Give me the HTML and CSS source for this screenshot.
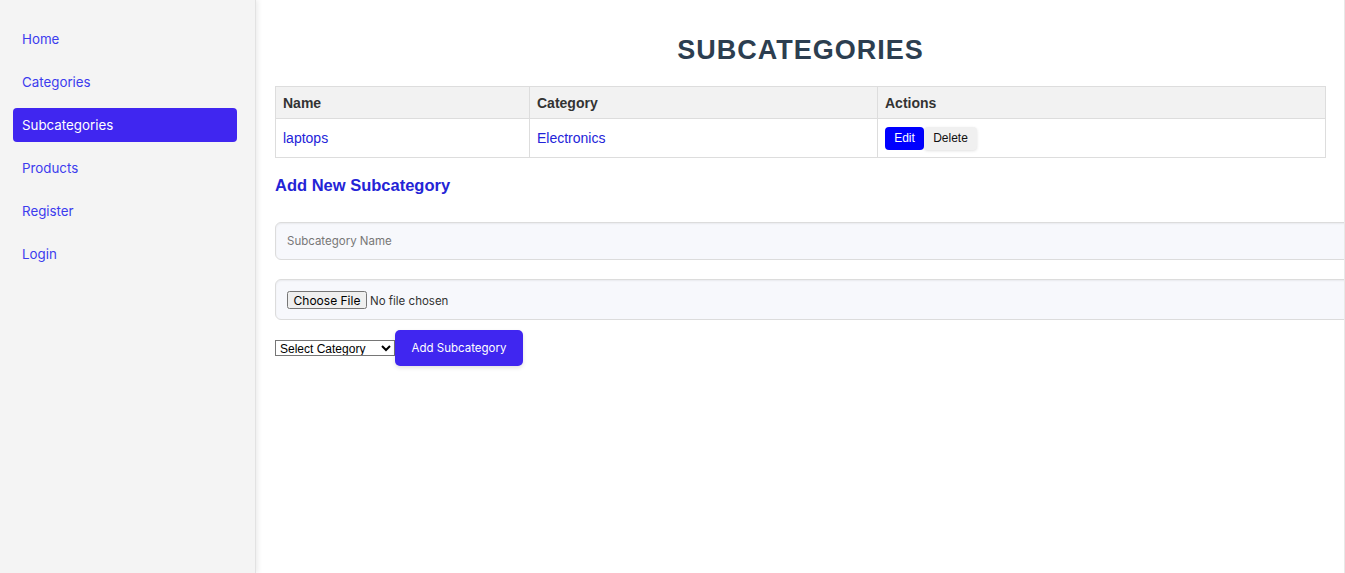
FILE: index.html
```html
<!DOCTYPE html>
<html>
<head>
<meta charset="utf-8">
<link rel="stylesheet" href="styles.css">
</head>
<body>
<div class="layout">
  <nav class="sidebar">
    <a class="nav-link" href="#">Home</a>
    <a class="nav-link" href="#">Categories</a>
    <a class="nav-link active" href="#">Subcategories</a>
    <a class="nav-link" href="#">Products</a>
    <a class="nav-link" href="#">Register</a>
    <a class="nav-link" href="#">Login</a>
  </nav>
  <main class="main">
    <h1 class="title">SUBCATEGORIES</h1>
    <table class="data-table">
      <thead>
        <tr><th class="col-name">Name</th><th class="col-cat">Category</th><th>Actions</th></tr>
      </thead>
      <tbody>
        <tr>
          <td>laptops</td>
          <td>Electronics</td>
          <td class="actions"><button class="btn-edit">Edit</button><button class="btn-delete">Delete</button></td>
        </tr>
      </tbody>
    </table>
    <h2 class="subtitle">Add New Subcategory</h2>
    <form class="form">
      <input class="field" type="text" placeholder="Subcategory Name">
      <div class="field file-field"><input type="file" class="file-input"></div>
      <div class="form-row">
        <select class="select"><option>Select Category</option></select>
        <button type="button" class="btn-add">Add Subcategory</button>
      </div>
    </form>
  </main>
</div>
</body>
</html>
```
FILE: styles.css
```css
* { box-sizing: border-box; }
html, body { margin: 0; padding: 0; height: 100%; }
body { font-family: Inter, "Liberation Sans", sans-serif; background: #fff; overflow: hidden; }
.layout { display: flex; height: 573px; }
.sidebar {
  width: 256px; flex: none;
  background: #f4f4f4;
  border-right: 1px solid #e2e2e2;
  box-shadow: 2px 0 5px rgba(0,0,0,0.08);
  padding: 22px 18px 0 13px;
  display: flex; flex-direction: column; gap: 9px;
  position: relative; z-index: 1;
}
.nav-link {
  display: block; height: 34px; line-height: 34px;
  padding: 0 9px; border-radius: 4px;
  color: #3c3cee; text-decoration: none; font-size: 13.33px;
}
.nav-link.active { background: #4026f0; color: #fff; }
.main {
  flex: 1; min-width: 0; overflow: hidden;
  padding: 0 18px 0 19px;
  border-right: 1px solid #e8e8e8;
  font-family: "Liberation Sans", Arial, sans-serif;
}
.title {
  margin: 35px 0 21px; text-align: center;
  font-size: 27px; line-height: 30px; font-weight: bold;
  color: #2c3e50; letter-spacing: 1px;
}
.data-table { width: 100%; border-collapse: collapse; border: 1px solid #ddd; font-size: 14px; }
.data-table th, .data-table td { border: 1px solid #ddd; text-align: left; padding: 0 7px; }
.data-table th { background: #f2f2f2; color: #333; height: 32px; font-weight: bold; }
.data-table td { height: 39px; color: #2323d9; }
.col-name { width: 254px; }
.col-cat { width: 348px; }
.actions { font-size: 0; }
.btn-edit, .btn-delete {
  font-family: "Liberation Sans", Arial, sans-serif; font-size: 12px;
  height: 23px; border: none; border-radius: 4px; padding: 0 9px; cursor: pointer;
}
.btn-edit { background: #0000ff; color: #fff; width: 39px; }
.btn-delete { background: #f0f0f0; color: #111; width: 53px; box-shadow: 0 1px 3px rgba(0,0,0,0.12); }
.subtitle {
  margin: 18px 0 27px; font-size: 16.5px; line-height: 19px; font-weight: bold; color: #2424d6;
}
.form { display: flex; flex-direction: column; }
.field {
  width: calc(100% + 40px);
  background: #f7f8fc; border: 1px solid #dcdcdc; border-radius: 6px;
  box-shadow: inset 0 1px 2px rgba(0,0,0,0.06);
  font-family: Inter, sans-serif; font-size: 11.5px; color: #333;
}
input.field { height: 38px; padding: 0 11px; outline: none; }
input.field::placeholder { color: #777; }
.file-field { height: 41px; margin-top: 19px; display: flex; align-items: center; padding: 0 11px; }
.file-input { font-family: Inter, sans-serif; font-size: 11.5px; color: #333; }
.file-input::file-selector-button { font-family: Inter, sans-serif; font-size: 12px; width: 80px; height: 18px; padding: 0; margin-right: 3px; }
.form-row { display: flex; align-items: center; margin-top: 10px; }
.select { font-family: "Liberation Sans", Arial, sans-serif; font-size: 12px; height: 16px; width: 120px; padding: 0; border: 1px solid #767676; border-radius: 0; background: #fff; color: #000; }
.btn-add {
  height: 36px; width: 128px; background: #4026f0; color: #fff; border: none; border-radius: 5px;
  font-family: Inter, sans-serif; font-size: 11.5px; padding-top: 1px; box-shadow: 0 2px 4px rgba(0,0,0,0.12);
}
```
